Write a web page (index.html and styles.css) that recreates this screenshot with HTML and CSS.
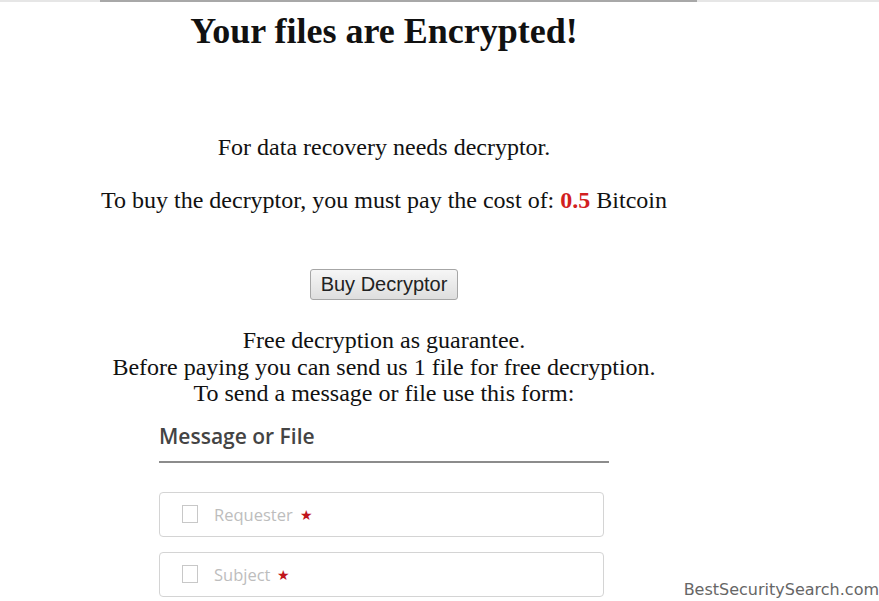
FILE: index.html
```html
<!DOCTYPE html>
<html>
<head>
    <title>Your files are Encrypted!</title>
    <link rel="stylesheet" href="styles.css">
</head>
<body>
    <div class="topline"><div class="topline-dark"></div></div>

    <div class="page">
        <h1>Your files are Encrypted!</h1>

        <p class="first">For data recovery needs decryptor.</p>
        <p>To buy the decryptor, you must pay the cost of: <span class="price">0.5</span> Bitcoin</p>

        <div class="buy">
            <button type="button">Buy Decryptor</button>
        </div>

        <div class="guarantee">
            Free decryption as guarantee.<br>
            Before paying you can send us 1 file for free decryption.<br>
            To send a message or file use this form:
        </div>

        <form class="msg-form">
            <h3>Message or File</h3>

            <label class="field">
                <span class="box"></span>
                <span class="hint">Requester</span>
                <span class="req">&#9733;</span>
            </label>

            <label class="field">
                <span class="box"></span>
                <span class="hint">Subject</span>
                <span class="req">&#9733;</span>
            </label>
        </form>
    </div>

    <div class="watermark">BestSecuritySearch.com</div>
</body>
</html>
```

FILE: styles.css
```css
/* General */
body {
    margin: 0;
    padding: 0;
    background-color: #fff;
    color: #111;
    font-family: "Liberation Serif", "Times New Roman", serif;
    overflow: hidden;
}

/* Top rule */
.topline {
    height: 2px;
    background-color: #e6e6e6;
}
.topline-dark {
    margin-left: 100px;
    width: 597px;
    height: 2px;
    background-color: #a8a8a8;
}

/* Centered column */
.page {
    width: 768px;
    text-align: center;
}
h1 {
    margin: 11px 0 0;
    font-size: 36px;
    line-height: 37px;
    font-weight: bold;
}
p {
    margin: 0;
    font-size: 24px;
    line-height: 25px;
}
p.first {
    margin-top: 85px;
    margin-bottom: 28px;
}
.price {
    color: #d21f1f;
    font-weight: bold;
}

/* Button */
.buy {
    margin-top: 56px;
}
.buy button {
    font-family: "Liberation Sans", Arial, sans-serif;
    font-size: 20px;
    color: #222;
    padding: 3px 10px;
    border: 1px solid #a6a6a6;
    border-radius: 3px;
    background: linear-gradient(#f6f6f6, #dedede);
}

/* Guarantee text */
.guarantee {
    margin-top: 27px;
    font-size: 24px;
    line-height: 26.5px;
}

/* Form */
.msg-form {
    width: 450px;
    margin: 15px auto 0;
    text-align: left;
}
.msg-form h3 {
    margin: 0;
    padding-bottom: 11px;
    border-bottom: 2px solid #8c8c8c;
    font-family: "Open Sans", "Noto Sans", sans-serif;
    font-size: 21px;
    font-weight: 600;
    color: #444;
}
.field {
    display: flex;
    align-items: center;
    width: 443px;
    height: 43px;
    margin-top: 29px;
    border: 1px solid #d4d4d4;
    border-radius: 4px;
    font-family: "Open Sans", "Noto Sans", sans-serif;
}
.field + .field {
    margin-top: 15px;
}
.box {
    width: 14px;
    height: 16px;
    margin-left: 22px;
    border: 1px solid #c8c8c8;
}
.hint {
    margin-left: 16px;
    font-size: 16.5px;
    color: #bdbdbd;
}
.req {
    margin-left: 7px;
    font-size: 14px;
    color: #c0141b;
}

/* Watermark */
.watermark {
    position: absolute;
    right: 0;
    top: 580px;
    font-family: "DejaVu Sans", Verdana, sans-serif;
    font-size: 16px;
    color: #666;
    white-space: nowrap;
}
```
